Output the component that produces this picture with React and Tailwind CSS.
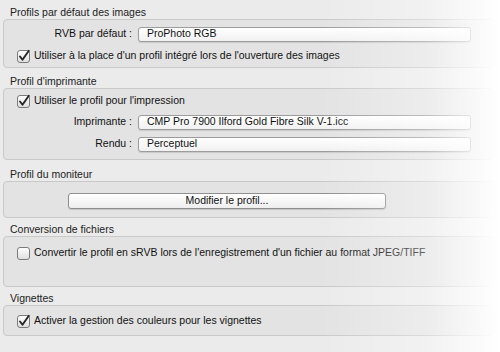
import React from "react";

const Check = ({ checked }) => (
  <svg width="13" height="13" viewBox="0 0 13 13" className="shrink-0 overflow-visible">
    <defs>
      <linearGradient id="cbg" x1="0" y1="0" x2="0" y2="1">
        <stop offset="0" stopColor="#ffffff" />
        <stop offset="1" stopColor="#dedede" />
      </linearGradient>
    </defs>
    <rect x="0.5" y="0.5" width="12" height="12" rx="2.5" fill="url(#cbg)" stroke="#7a7a7a" />
    {checked && (
      <path d="M3 6.5 L5.5 9.8 L11.8 0.8" fill="none" stroke="#262626" strokeWidth="1.9" strokeLinecap="round" strokeLinejoin="round" />
    )}
  </svg>
);

const Select = ({ value }) => (
  <div className="h-[15px] w-[333px] rounded-[3px] border border-[#9c9c9c] bg-linear-to-b from-white to-[#f1f1f1] shadow-[0_1px_1px_rgba(0,0,0,0.12)] flex items-center pl-[8px] text-[#111]">
    {value}
  </div>
);

const Row = ({ label, value }) => (
  <div className="h-[16px] flex items-center">
    <div className="w-[131px] text-right pr-[3px]">{label}</div>
    <div className="ml-[3px]">
      <Select value={value} />
    </div>
  </div>
);

const CheckRow = ({ checked, children }) => (
  <div className="h-[16px] flex items-center pl-[13px] gap-[4px]">
    <Check checked={checked} />
    <span>{children}</span>
  </div>
);

const Section = ({ title, className, children }) => (
  <div>
    <div className="h-[14px] leading-[14px] pl-[10px] text-[#222]">{title}</div>
    <div className={`ml-[3px] w-[493px] rounded-[4px] border border-[#c9c9c9] bg-[#e3e3e3] ${className}`}>
      {children}
    </div>
  </div>
);

export default function App() {
  return (
    <div
      className="relative w-[500px] h-[352px] overflow-hidden bg-[#ebebeb] text-[10.5px] text-[#111]"
      style={{ fontFamily: '"Liberation Sans", Arial, sans-serif' }}
    >
      <div className="pt-[5px] flex flex-col">
        <Section title="Profils par défaut des images" className="h-[49px] pt-[6px]">
          <Row label="RVB par défaut :" value="ProPhoto RGB" />
          <div className="mt-[6px]">
            <CheckRow checked>Utiliser à la place d'un profil intégré lors de l'ouverture des images</CheckRow>
          </div>
        </Section>

        <div className="mt-[6px]">
          <Section title="Profil d'imprimante" className="h-[72px] pt-[4px]">
            <CheckRow checked>Utiliser le profil pour l'impression</CheckRow>
            <div className="mt-[5px]">
              <Row label="Imprimante :" value="CMP Pro 7900 Ilford Gold Fibre Silk V-1.icc" />
            </div>
            <div className="mt-[6px]">
              <Row label="Rendu :" value="Perceptuel" />
            </div>
          </Section>
        </div>

        <div className="mt-[7px]">
          <Section title="Profil du moniteur" className="h-[37px] pt-[11px]">
            <div className="ml-[64px] w-[318px] h-[16px] rounded-[3px] border border-[#8f8f8f] bg-linear-to-b from-white to-[#eeeeee] shadow-[0_1px_1px_rgba(0,0,0,0.15)] flex items-center justify-center text-[#111]">
              Modifier le profil...
            </div>
          </Section>
        </div>

        <div className="mt-[4px]">
          <Section title="Conversion de fichiers" className="h-[51px] pt-[8px]">
            <CheckRow checked={false}>
              Convertir le profil en sRVB lors de l'enregistrement d'un fichier au format JPEG/TIFF
            </CheckRow>
          </Section>
        </div>

        <div className="mt-[4px]">
          <Section title="Vignettes" className="h-[31px] pt-[7px]">
            <CheckRow checked>Activer la gestion des couleurs pour les vignettes</CheckRow>
          </Section>
        </div>
      </div>

      <div className="absolute top-0 bottom-0 right-0 w-[180px] bg-linear-to-r from-white/0 via-white/35 via-60% to-white pointer-events-none" />
    </div>
  );
}
